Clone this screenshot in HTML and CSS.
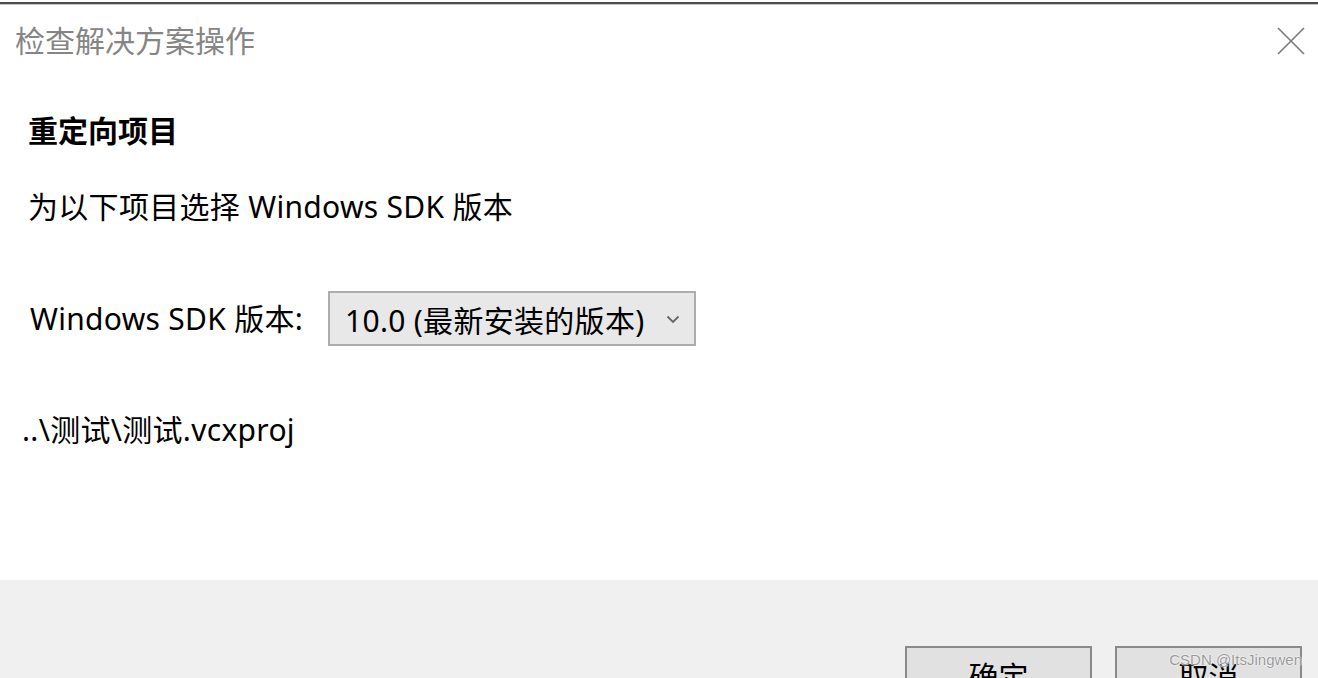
FILE: index.html
```html
<!DOCTYPE html>
<html>
<head>
  <title>检查解决方案操作</title>
  <meta charset="utf-8">
  <link rel="stylesheet" href="styles.css">
</head>
<body>

  <div class="window">
    <!-- Title bar -->
    <div class="titlebar">
      <span class="title">检查解决方案操作</span>
      <span class="close">
        <svg width="28" height="28" viewBox="0 0 28 28">
          <path d="M1 1 L27 27 M27 1 L1 27" stroke="#7a7a7a" stroke-width="1.6" fill="none"/>
        </svg>
      </span>
    </div>

    <div class="content">
      <h2 class="heading">重定向项目</h2>
      <p class="desc">为以下项目选择 Windows SDK 版本</p>

      <div class="sdk-row">
        <label class="sdk-label">Windows SDK 版本:</label>
        <div class="select">
          <span>10.0 (最新安装的版本)</span>
          <svg class="chevron" width="14" height="9" viewBox="0 0 14 9">
            <path d="M1.5 1.5 L7 7 L12.5 1.5" stroke="#666" stroke-width="1.8" fill="none"/>
          </svg>
        </div>
      </div>

      <p class="path">..\测试\测试.vcxproj</p>
    </div>

    <div class="footer">
      <button class="btn">确定</button>
      <button class="btn">取消</button>
      <span class="watermark">CSDN @ItsJingwen</span>
    </div>
  </div>

</body>
</html>
```

FILE: styles.css
```css
/* Page */
html, body {
  height: 100%;
}

body {
  margin: 0;
  padding-top: 2px;
  box-sizing: border-box;
  background-color: #fff;
  font-family: "Noto Sans", "Noto Sans CJK SC", sans-serif;
  letter-spacing: 0.3px;
  color: #000;
  overflow: hidden;
}

.window {
  height: 100%;
  display: flex;
  flex-direction: column;
  border-top: 2px solid #4d4d4d;
  box-shadow: inset 0 1px 0 #c4c4c4;
}

/* Title bar */
.titlebar {
  display: flex;
  align-items: center;
  justify-content: space-between;
  height: 72px;
  margin-top: 1px;
  padding: 0 13px 0 15px;
  flex-shrink: 0;
}

.title {
  font-size: 30px;
  line-height: 40px;
  color: #858585;
  letter-spacing: 0;
}

.close {
  display: flex;
}

/* Content */
.content {
  flex: 1;
  padding-left: 28px;
}

.heading {
  margin: 34px 0 0;
  font-size: 30px;
  line-height: 40px;
  font-weight: bold;
  letter-spacing: 0;
}

.desc {
  margin: 36px 0 0;
  font-size: 30px;
  line-height: 40px;
}

.sdk-row {
  display: flex;
  align-items: center;
  margin-top: 64px;
  height: 55px;
}

.sdk-label {
  font-size: 30px;
  line-height: 40px;
  padding-left: 2px;
  width: 298px;
}

.select {
  display: flex;
  align-items: center;
  justify-content: space-between;
  box-sizing: border-box;
  width: 368px;
  height: 55px;
  padding: 0 14px 0 15px;
  border: 2px solid #adadad;
  background-color: #e8e8e8;
  font-size: 30px;
}

.chevron {
  margin-top: 2px;
}

.path {
  margin: 64px 0 0 -6px;
  font-size: 30px;
  line-height: 40px;
}

/* Footer with buttons */
.footer {
  position: relative;
  display: flex;
  justify-content: flex-end;
  align-items: flex-start;
  gap: 23px;
  height: 100px;
  padding: 66px 16px 0 0;
  box-sizing: border-box;
  background-color: #f0f0f0;
  flex-shrink: 0;
}

.btn {
  width: 187px;
  height: 58px;
  border: 2px solid #8a8a8a;
  background-color: #e1e1e1;
  font-family: inherit;
  font-size: 30px;
  padding: 0;
  flex-shrink: 0;
}

.watermark {
  position: absolute;
  right: 16px;
  top: 71px;
  font-family: "Liberation Sans", sans-serif;
  font-size: 15px;
  letter-spacing: 0;
  color: #9a9a9a;
  text-shadow: 0 0 2px #fff, 0 0 1px #fff;
}
```
